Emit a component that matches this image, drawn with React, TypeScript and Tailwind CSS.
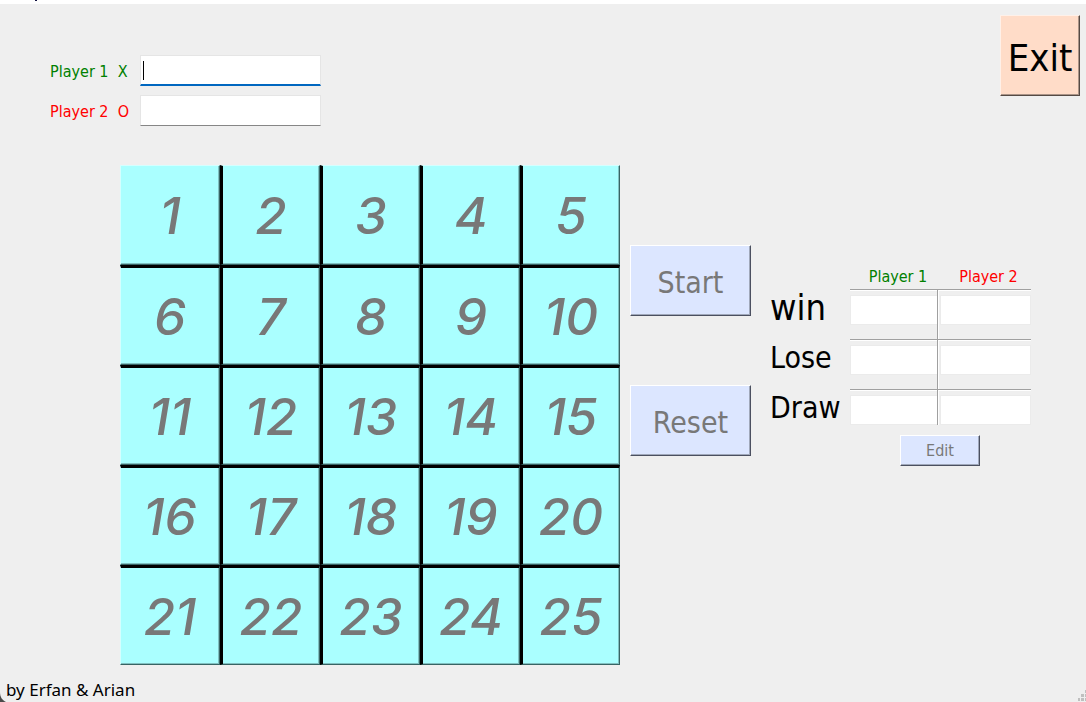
const cells = Array.from({ length: 25 }, (_, i) => i + 1);

const raisedBlue =
  "border border-t-white border-l-white border-r-[#4b5060] border-b-[#4b5060] bg-[#dce6ff] text-[#787878] shadow-[inset_-1px_-1px_0_#a0a8ba]";

function cellBorders(n: number) {
  const left = n % 5 === 1 ? "border-l border-l-[#d4ffff]" : "border-l-3 border-l-black";
  const top = n <= 5 ? "border-t border-t-[#d4ffff]" : "border-t-3 border-t-black";
  return `${left} ${top}`;
}

function Board() {
  return (
    <div className="grid shrink-0 grid-cols-[repeat(5,100px)] auto-rows-[100px]">
      {cells.map((n) => (
        <button
          key={n}
          type="button"
          disabled
          className={`${cellBorders(n)} border-r border-b border-r-[#386464] border-b-[#386464] bg-[#aaffff] pt-0.5 font-['Inter'] text-[51px] font-medium text-[#787878] italic shadow-[inset_-1px_-1px_0_#80c0c0]`}
        >
          {n}
        </button>
      ))}
    </div>
  );
}

const scoreRows = [
  { label: "win", size: "text-4xl", height: "h-[50px]" },
  { label: "Lose", size: "text-3xl", height: "h-[50px]" },
  { label: "Draw", size: "text-3xl", height: "h-9" },
];

const scoreInput =
  "block h-[30px] w-full border border-[#ebebeb] bg-white px-1 outline-none";

function ScoreTable() {
  return (
    <div className="flex flex-col">
      <table className="table-fixed border-separate border-spacing-0">
        <colgroup>
          <col className="w-20" />
          <col className="w-22" />
          <col className="w-[93px]" />
        </colgroup>
        <thead>
          <tr className="h-6 text-base">
            <td className="p-0" />
            <th scope="col" className="p-0 pl-2 font-normal text-[#008000]">
              Player 1
            </th>
            <th scope="col" className="p-0 pl-2 font-normal text-[#ff0000]">
              Player 2
            </th>
          </tr>
        </thead>
        <tbody>
          {scoreRows.map(({ label, size, height }) => (
            <tr key={label} className={height}>
              <th scope="row" className={`${size} p-0 text-left align-top leading-[38px] font-normal`}>
                <span className="block h-9">{label}</span>
              </th>
              <td className="border-t border-r border-[#a0a0a0] p-0 pt-[5px] align-top shadow-[inset_0_1px_0_white]">
                <input
                  aria-label={`Player 1 ${label}`}
                  readOnly
                  className={`${scoreInput} border-r-0`}
                />
              </td>
              <td className="border-t border-[#a0a0a0] p-0 pt-[5px] pl-0.5 align-top shadow-[inset_0_1px_0_white,inset_1px_0_0_white]">
                <input
                  aria-label={`Player 2 ${label}`}
                  readOnly
                  className={scoreInput}
                />
              </td>
            </tr>
          ))}
        </tbody>
      </table>
      <button
        type="button"
        disabled
        className={`${raisedBlue} mt-[10px] ml-[130px] h-[31px] w-20 pt-px text-base`}
      >
        Edit
      </button>
    </div>
  );
}

export default function App() {
  return (
    <div className="flex min-h-screen flex-col bg-[#efefef] font-['DejaVu_Sans_Condensed','DejaVu_Sans',sans-serif] text-black">
      <div className="h-1 bg-white pl-[35px]">
        <div className="h-px w-0.5 bg-[#101040]" />
      </div>
      <header className="flex items-start justify-between pt-[11px] pr-[6px] pl-[50px]">
        <form className="flex flex-col gap-[9px] pt-10 text-base">
          <div className="flex items-center text-[#008000]">
            <label htmlFor="player1" className="w-[90px] pt-0.5 whitespace-pre">
              {"Player 1  X"}
            </label>
            <div className="relative">
              <input
                id="player1"
                className="peer block h-[31px] w-[181px] border border-b-2 border-[#e5e5e5] border-b-[#0067c0] bg-white px-0.5 text-black outline-none"
              />
              <span
                aria-hidden="true"
                className="pointer-events-none absolute top-1.5 left-[3px] h-[19px] w-px bg-black peer-focus:hidden"
              />
            </div>
          </div>
          <div className="flex items-center text-[#ff0000]">
            <label htmlFor="player2" className="w-[90px] pt-0.5 whitespace-pre">
              {"Player 2  O"}
            </label>
            <input
              id="player2"
              className="h-[31px] w-[181px] border border-[#e5e5e5] border-b-[#868686] bg-white px-0.5 text-black outline-none"
            />
          </div>
        </form>
        <button
          type="button"
          className="h-[81px] w-20 border border-t-[#fff0e8] border-r-[#554a44] border-b-[#554a44] border-l-[#fff0e8] bg-[#ffdcc8] pt-1.5 text-[38px] shadow-[inset_-1px_-1px_0_#aa9488]"
        >
          Exit
        </button>
      </header>
      <main className="flex items-start pt-[39px] pl-[120px]">
        <Board />
        <div className="flex flex-col gap-[69px] pt-20 pl-[10px] text-3xl">
          <button type="button" disabled className={`${raisedBlue} h-[71px] w-[121px] pt-1`}>
            Start
          </button>
          <button type="button" disabled className={`${raisedBlue} h-[71px] w-[121px] pt-1`}>
            Reset
          </button>
        </div>
        <div className="pt-[100px] pl-[19px]">
          <ScoreTable />
        </div>
      </main>
      <footer className="relative mt-auto flex items-end justify-between">
        <svg
          className="absolute bottom-0 left-0"
          width="6"
          height="10"
          viewBox="0 0 6 10"
          fill="#4a4a4a"
          aria-hidden="true"
        >
          <path d="M0 0C0 5 2 8 6 10H0z" />
        </svg>
        <p className="pl-[6px] font-['Noto_Sans',sans-serif] text-[17px] leading-6">
          by Erfan &amp; Arian
        </p>
        <svg width="8" height="12" viewBox="0 0 8 12" fill="#bfbfbf" aria-hidden="true">
          <path d="M7 0h1v3H7zM3 4h3v3H3zM7 4h1v3H7zM0 8h2v3H0zM3 8h3v3H3zM7 8h1v3H7z" />
        </svg>
      </footer>
    </div>
  );
}
